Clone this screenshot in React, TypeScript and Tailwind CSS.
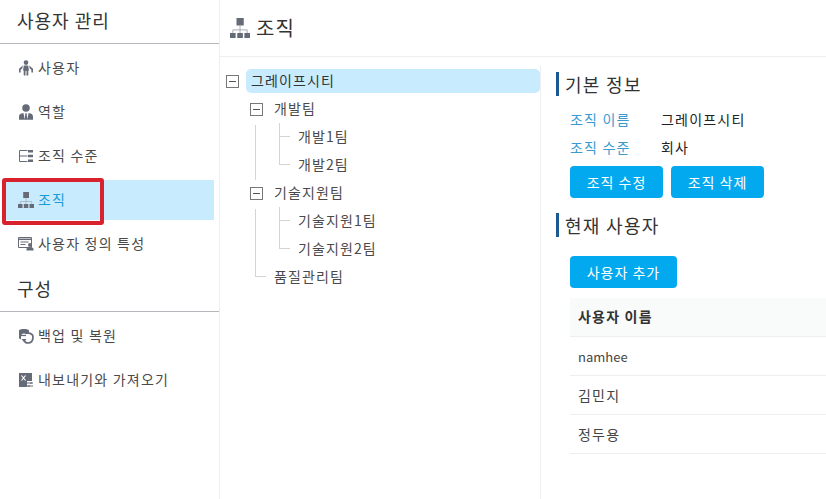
const font = "font-['Malgun_Gothic','Noto_Sans_CJK_KR',sans-serif]";

const iconColor = '#666b78';

function UserIcon() {
  return (
    <svg width="16" height="16" viewBox="0 0 16 16" fill={iconColor}>
      <circle cx="8" cy="2.600" r="2.300" />
      <path d="M5.800 5.500h4.400l.8 5h-.7v5H8.500v-4.500h-1v4.500H5.700v-5H5z" />
      <path d="M4.800 5.500 1 8.800v3.700h1.600V9.800l1.700-1.400zM11.200 5.500 15 8.800v3.700h-1.600V9.800l-1.700-1.400z" />
    </svg>
  );
}

function RoleIcon() {
  return (
    <svg width="16" height="16" viewBox="0 0 16 16" fill={iconColor}>
      <circle cx="8" cy="4" r="3.800" />
      <path d="M1 15.800v-3.300c0-2 1.600-3.200 4.400-3.500l1.500 6.800zM15 15.800v-3.300c0-2-1.600-3.200-4.400-3.500l-1.500 6.800zM7.300 9.200h1.400l.5 6.600H6.800z" />
    </svg>
  );
}

function LevelIcon() {
  return (
    <svg width="16" height="16" viewBox="0 0 16 16" fill="none">
      <path d="M1.500 2.500h8M1.500 13.500h8M1.500 2.500v11M1.500 8h8" stroke={iconColor} strokeWidth="1" />
      <path d="M10 2h5v2.500h-5zM10 6.800h5v2.500h-5zM10 11.500h5V14h-5z" fill={iconColor} />
    </svg>
  );
}

function OrgIcon({ size = 16 }: { size?: number }) {
  return (
    <svg width={size} height={size} viewBox="0 0 16 16" fill={iconColor}>
      <rect x="5.200" y="0" width="5.800" height="6" />
      <path d="M8 6v6M2.300 12V9.500h11.400V12" fill="none" stroke="#a9adb6" strokeWidth="0.800" />
      <rect x="0" y="12" width="4.500" height="4" />
      <rect x="5.800" y="12" width="4.500" height="4" />
      <rect x="11.500" y="12" width="4.500" height="4" />
    </svg>
  );
}

function AttrIcon() {
  return (
    <svg width="16" height="16" viewBox="0 0 16 16" fill="none">
      <path d="M.5 1.500h13v10H.5z" stroke={iconColor} />
      <path d="M.5 3.300h13" stroke={iconColor} strokeWidth="1.500" />
      <path d="M2.500 6h8M2.500 8.500h5" stroke={iconColor} />
      <circle cx="12" cy="9" r="2" fill={iconColor} />
      <path d="M8.500 14.500v-1.300c0-1 1-1.700 2-1.700h3c1 0 2 .7 2 1.700v1.300z" fill={iconColor} />
    </svg>
  );
}

function BackupIcon() {
  return (
    <svg width="16" height="16" viewBox="0 0 16 16" fill="none">
      <path d="M1 2.500C1 .5 11 .5 11 2.500v3H6c-2 0-3 1.500-3 3v2.800c-1.200-.3-2-.8-2-1.300z" fill={iconColor} />
      <path d="M7 5.500c3-1 8-.5 8 3.500 0 4-2 6-5 6-2 0-3.500-1-4-3" stroke={iconColor} strokeWidth="1.700" />
      <path d="M3.500 11h5l-2.500 3z" fill={iconColor} />
      <path d="M3 7.500h5" stroke={iconColor} strokeWidth="1.200" />
    </svg>
  );
}

function ExportIcon() {
  return (
    <svg width="16" height="16" viewBox="0 0 16 16">
      <path d="M1 1h13v8H9v6H1z" fill={iconColor} />
      <path d="m3.500 3.500 4 5M7.500 3.500l-4 5" stroke="#fff" strokeWidth="1.200" />
      <path d="M9 11h6M9 14h6" stroke={iconColor} strokeWidth="1.100" />
      <path d="m12.500 9.800 2 1.200-2 1.200zM11.500 12.800l-2 1.200 2 1.200z" fill={iconColor} />
    </svg>
  );
}

function SectionHeading({ children }: { children: string }) {
  return (
    <div className="h-[44px] flex items-center pl-[17px] pb-[2px] text-[18px] tracking-[1px] text-[#333] border-b border-[#b4b8bc] mt-1 first:mt-0">
      {children}
    </div>
  );
}

function NavItem({ icon, label, active }: { icon: React.ReactNode; label: string; active?: boolean }) {
  return (
    <div
      className={`mt-1 mx-[5px] h-10 flex items-center gap-1 pl-[13px] pb-px text-[14px] tracking-[1.200px] ${
        active ? 'bg-[#c8ecfd] text-[#1c9bd8]' : 'text-[#4a4a4a]'
      }`}
    >
      {icon}
      <span>{label}</span>
    </div>
  );
}

function Toggle() {
  return (
    <span className="w-[13px] h-[13px] border border-[#777] flex items-center justify-center shrink-0 bg-white">
      <span className="w-[7px] h-[1px] bg-[#555]" />
    </span>
  );
}

function TreeRow({ label, depth, toggle, selected, line }: { label: string; depth: number; toggle?: boolean; selected?: boolean; line?: 'mid' | 'last' }) {
  return (
    <div className="relative h-[28px] flex items-center text-[14px] tracking-[1.100px] text-[#4a4a4a]">
      {toggle && (
        <span className={depth === 0 ? 'absolute left-[6px]' : 'absolute left-[30px]'}>
          <Toggle />
        </span>
      )}
      {line && (
        <span
          className={`absolute border-l border-b border-[#d4d4d4] w-[11px] ${depth === 2 ? 'left-[59px]' : 'left-[35px]'} ${
            line === 'mid' ? 'top-0 h-[14px]' : '-top-[14px] h-[28px]'
          }`}
        />
      )}
      {selected ? (
        <span className="ml-[26px] flex-1 h-6 rounded-[5px] bg-[#c8ecfd] pl-[5px] pb-[2px] flex items-center text-[#333]">{label}</span>
      ) : (
        <span className={`pb-[2px] ${depth === 1 ? 'ml-[54px]' : 'ml-[78px]'}`}>{label}</span>
      )}
    </div>
  );
}

function SubHeading({ children }: { children: string }) {
  return <h2 className="h-6 border-l-[3px] border-[#1b5a91] pl-[6px] flex items-center text-[18px] tracking-[1.300px] text-[#333]">{children}</h2>;
}

function Button({ children, className }: { children: string; className: string }) {
  return <button className={`h-8 rounded-[4px] bg-[#03a9ee] text-white text-[14px] tracking-[1px] ${className}`}>{children}</button>;
}

function Tree() {
  return (
    <div className="w-[321px] mt-[9px] border-r border-[#eceef0] pt-px">
      <TreeRow label="그레이프시티" depth={0} toggle selected />
      <TreeRow label="개발팀" depth={1} toggle />
      <div className="relative">
        <span className="absolute left-[35px] top-[2px] h-[55px] border-l border-[#d4d4d4]" />
        <TreeRow label="개발1팀" depth={2} line="mid" />
        <TreeRow label="개발2팀" depth={2} line="last" />
      </div>
      <TreeRow label="기술지원팀" depth={1} toggle />
      <div className="relative">
        <span className="absolute left-[35px] top-[2px] h-[55px] border-l border-[#d4d4d4]" />
        <TreeRow label="기술지원1팀" depth={2} line="mid" />
        <TreeRow label="기술지원2팀" depth={2} line="last" />
      </div>
      <TreeRow label="품질관리팀" depth={1} line="last" />
    </div>
  );
}

export default function App() {
  return (
    <div className={`${font} flex h-[499px] w-[826px] overflow-hidden bg-white relative`}>
      <aside className="w-[220px] shrink-0 border-r border-[#eceef0]">
        <SectionHeading>사용자 관리</SectionHeading>
        <NavItem icon={<UserIcon />} label="사용자" />
        <NavItem icon={<RoleIcon />} label="역할" />
        <NavItem icon={<LevelIcon />} label="조직 수준" />
        <NavItem icon={<OrgIcon />} label="조직" active />
        <NavItem icon={<AttrIcon />} label="사용자 정의 특성" />
        <SectionHeading>구성</SectionHeading>
        <NavItem icon={<BackupIcon />} label="백업 및 복원" />
        <NavItem icon={<ExportIcon />} label="내보내기와 가져오기" />
      </aside>

      <main className="flex-1 min-w-0 flex flex-col">
        <header className="h-[57px] shrink-0 border-b border-[#eceef0] flex items-center gap-[6px] pl-[10px] text-[20px] tracking-[1.200px] text-[#333]">
          <OrgIcon size={20} />
          <span>조직</span>
        </header>
        <div className="flex flex-1 min-h-0">
          <Tree />
          <section className="flex-1 min-w-0 pl-[15px] pt-[15px] text-[14px] tracking-[1.200px]">
            <SubHeading>기본 정보</SubHeading>
            <dl className="pl-[14px] mt-[9px]">
              <div className="h-7 flex items-center">
                <dt className="w-[91px] text-[#3a9bd0]">조직 이름</dt>
                <dd className="text-[#222]">그레이프시티</dd>
              </div>
              <div className="h-7 flex items-center">
                <dt className="w-[91px] text-[#3a9bd0]">조직 수준</dt>
                <dd className="text-[#222]">회사</dd>
              </div>
            </dl>
            <div className="pl-[14px] mt-[5px] flex gap-2">
              <Button className="w-[93px]">조직 수정</Button>
              <Button className="w-[93px]">조직 삭제</Button>
            </div>
            <div className="mt-[15px]">
              <SubHeading>현재 사용자</SubHeading>
            </div>
            <div className="pl-[14px] mt-[19px]">
              <Button className="w-[107px]">사용자 추가</Button>
              <table className="mt-[10px] w-[256px] text-[#444]">
                <thead>
                  <tr className="h-[38px] bg-[#f9fafa] border-b border-[#eceef0]">
                    <th className="pl-2 text-left font-bold text-[#333]">사용자 이름</th>
                  </tr>
                </thead>
                <tbody>
                  <tr className="h-[39px] border-b border-[#eceef0]">
                    <td className="pl-2 pt-[2px] text-[13px] tracking-normal">namhee</td>
                  </tr>
                  {['김민지', '정두용'].map((name) => (
                    <tr key={name} className="h-[39px] border-b border-[#eceef0]">
                      <td className="pl-2 pt-px">{name}</td>
                    </tr>
                  ))}
                </tbody>
              </table>
            </div>
          </section>
        </div>
      </main>

      <div className="absolute left-[2px] top-[178px] w-[102px] h-[47px] border-[4px] border-[#d8232e] rounded-[3px]" />
    </div>
  );
}
